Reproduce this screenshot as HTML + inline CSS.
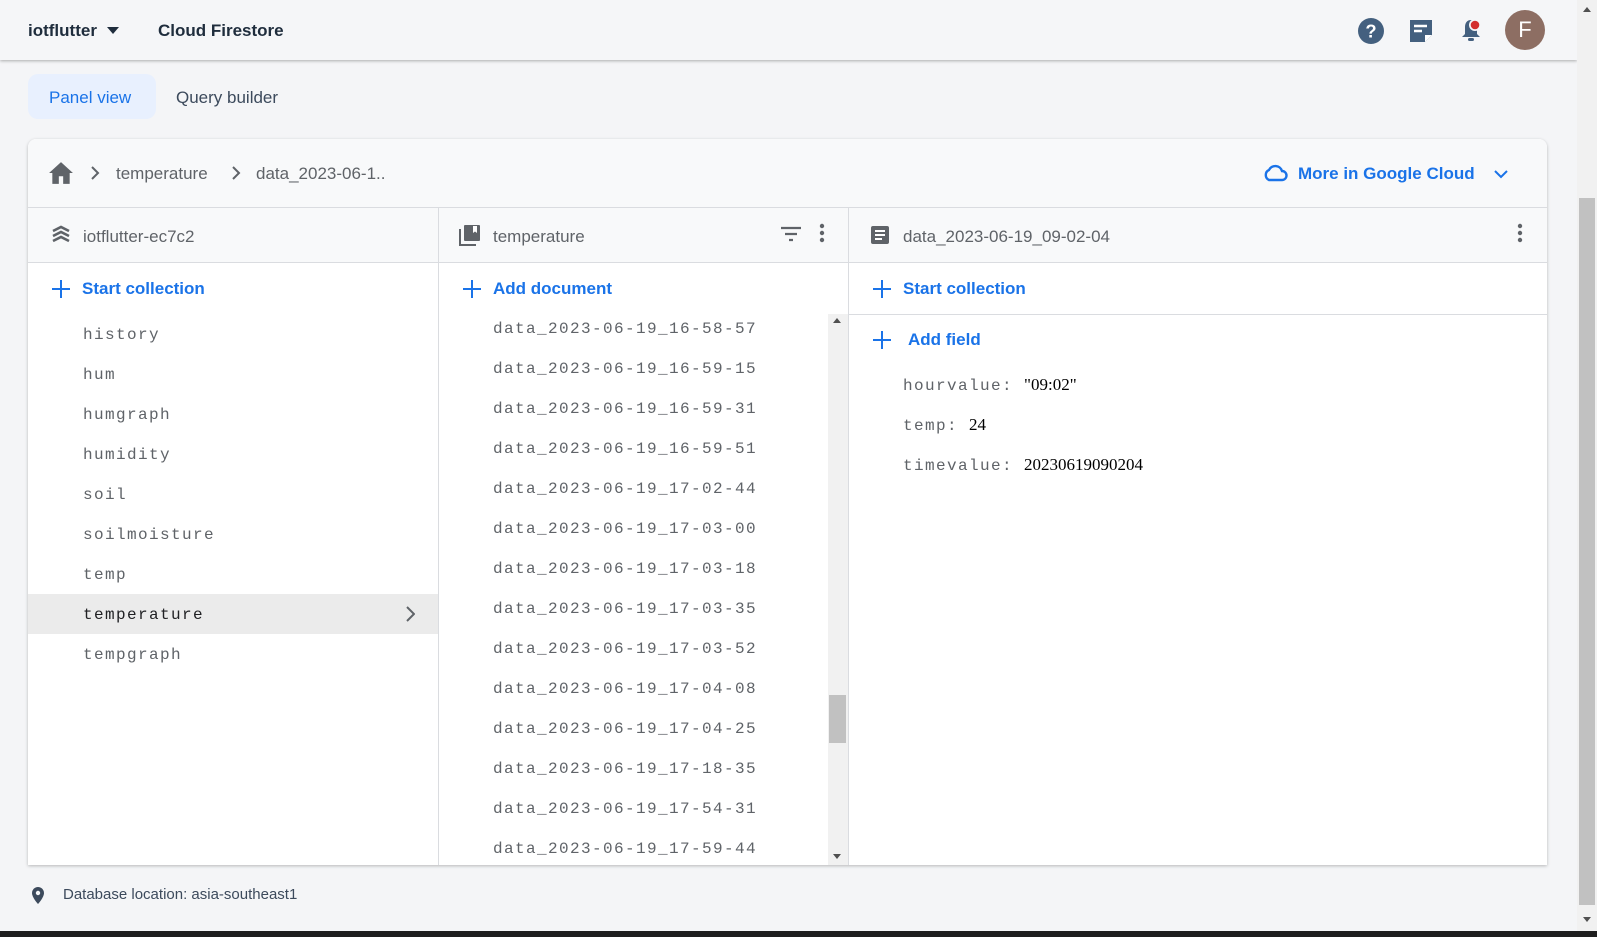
<!DOCTYPE html>
<html><head><meta charset="utf-8"><style>
*{box-sizing:border-box;margin:0;padding:0}
body{width:1597px;height:937px;overflow:hidden;background:#f4f5f7;font-family:"Liberation Sans",sans-serif;position:relative}
.abs{position:absolute}
.hdr{left:0;top:0;width:1577px;height:60px;background:#f5f6f8;box-shadow:0 1px 3px rgba(0,0,0,.3)}
.t{position:absolute;white-space:nowrap;line-height:20px}
.mono{font-family:"Liberation Mono",monospace;font-size:16px;letter-spacing:1.4px;color:#5f6368}
.blue{color:#1a73e8;font-size:17px;font-weight:bold}
.card{left:28px;top:139px;width:1519px;height:726px;background:#fff;border-radius:8px 8px 0 0;box-shadow:0 1px 3px rgba(0,0,0,.25);overflow:hidden}
.plus{position:absolute;width:18px;height:18px}
.plus:before{content:"";position:absolute;left:8px;top:0;width:2px;height:18px;background:#1a73e8}
.plus:after{content:"";position:absolute;left:0;top:8px;width:18px;height:2px;background:#1a73e8}
</style></head><body>
<div class="abs hdr"></div>
<div class="t" style="left:28px;top:21px;font-size:17px;font-weight:bold;color:#1f2d3d">iotflutter</div>
<svg class="abs" style="left:106px;top:26px" width="14" height="9"><path d="M1 1h12L7 8z" fill="#1f2d3d"/></svg>
<div class="t" style="left:158px;top:21px;font-size:17px;font-weight:bold;color:#1f2d3d">Cloud Firestore</div>
<svg class="abs" style="left:1358px;top:18px" width="26" height="26" viewBox="0 0 24 24"><circle cx="12" cy="12" r="12" fill="#44607f"/><text x="12" y="18" text-anchor="middle" font-family="Liberation Sans" font-weight="bold" font-size="17" fill="#fff">?</text></svg>
<svg class="abs" style="left:1409px;top:19px" width="24" height="24" viewBox="0 0 24 24"><path d="M1 1h22v15l-7 7H1z" fill="#44607f"/><path d="M5 7h13M5 12h8" stroke="#fff" stroke-width="2.5"/><path d="M16 23v-7h7" fill="#fff"/></svg>
<svg class="abs" style="left:1459px;top:17px" width="24" height="26" viewBox="0 0 24 26"><path d="M12 3c-4 0-6 3-6 7v7l-3 3h18l-3-3v-7c0-4-2-7-6-7z" fill="#44607f"/><rect x="9" y="21" width="6" height="3" rx="1.5" fill="#44607f"/><circle cx="16" cy="8" r="6" fill="#f5f6f8"/><circle cx="16" cy="8" r="4.3" fill="#d32f2f"/></svg>
<div class="abs" style="left:1505px;top:10px;width:40px;height:40px;border-radius:50%;background:#8d6e63;color:#fff;font-size:22px;text-align:center;line-height:40px">F</div>

<div class="abs" style="left:28px;top:74px;width:128px;height:45px;border-radius:10px;background:#e8f0fe"></div>
<div class="t" style="left:49px;top:88px;font-size:17px;color:#1a73e8">Panel view</div>
<div class="t" style="left:176px;top:88px;font-size:17px;color:#3c4a5c">Query builder</div>

<div class="abs card">
 <div class="abs" style="left:0;top:0;width:1519px;height:69px;background:#f8f9fa;border-bottom:1px solid #dadce0"></div>
 <svg class="abs" style="left:20px;top:22px" width="26" height="24" viewBox="0 0 24 22"><path d="M12 1L1 11h3v10h6v-7h4v7h6V11h3z" fill="#5f6368"/></svg>
 <svg class="abs" style="left:62px;top:26px" width="10" height="16"><path d="M2 2l6 6-6 6" stroke="#5f6368" stroke-width="2" fill="none"/></svg>
 <div class="t" style="left:88px;top:25px;font-size:17px;color:#5f6368">temperature</div>
 <svg class="abs" style="left:203px;top:26px" width="10" height="16"><path d="M2 2l6 6-6 6" stroke="#5f6368" stroke-width="2" fill="none"/></svg>
 <div class="t" style="left:228px;top:25px;font-size:17px;color:#5f6368">data_2023-06-1..</div>
 <svg class="abs" style="left:1234px;top:25px" width="26" height="18" viewBox="0 0 26 18"><path d="M7 16H20a4.5 4.5 0 0 0 0-9 7 7 0 0 0-13-1A5.5 5.5 0 0 0 7 16z" stroke="#1a73e8" stroke-width="2.4" fill="none"/></svg>
 <div class="t" style="left:1270px;top:25px;font-size:17px;font-weight:bold;color:#1a73e8">More in Google Cloud</div>
 <svg class="abs" style="left:1465px;top:29px" width="16" height="12"><path d="M2 3l6 6 6-6" stroke="#1a73e8" stroke-width="2" fill="none"/></svg>

 <div class="abs" style="left:0;top:69px;width:1519px;height:55px;background:#f8f9fa;border-bottom:1px solid #dadce0"></div>
 <div class="abs" style="left:410px;top:69px;width:1px;height:660px;background:#dadce0"></div>
 <div class="abs" style="left:820px;top:69px;width:1px;height:660px;background:#dadce0"></div>
 <svg class="abs" style="left:23px;top:86px" width="20" height="22" viewBox="0 0 20 22"><path d="M2 6l8-4 8 4M2 11l8-4 8 4M2 16l8-4 8 4" stroke="#5f6368" stroke-width="2.6" fill="none"/></svg>
 <div class="t" style="left:55px;top:88px;font-size:17px;color:#5f6368">iotflutter-ec7c2</div>
 <svg class="abs" style="left:431px;top:85px" width="22" height="22" viewBox="0 0 22 22"><path d="M1 5v16h16" stroke="#5f6368" stroke-width="2" fill="none"/><rect x="5" y="1" width="16" height="16" rx="1" fill="#5f6368"/><path d="M14 2v7l2-1.5 2 1.5V2z" fill="#fff"/></svg>
 <div class="t" style="left:465px;top:88px;font-size:17px;color:#5f6368">temperature</div>
 <svg class="abs" style="left:752px;top:87px" width="22" height="16"><path d="M1 2h20M5 8h12M9 14h4" stroke="#5f6368" stroke-width="2.2"/></svg>
 <svg class="abs" style="left:791px;top:84px" width="6" height="20"><circle cx="3" cy="3" r="2.2" fill="#5f6368"/><circle cx="3" cy="10" r="2.2" fill="#5f6368"/><circle cx="3" cy="17" r="2.2" fill="#5f6368"/></svg>
 <svg class="abs" style="left:842px;top:86px" width="20" height="20" viewBox="0 0 20 20"><rect x="1" y="1" width="18" height="18" rx="2" fill="#5f6368"/><path d="M5 6h10M5 10h10M5 14h7" stroke="#fff" stroke-width="2"/></svg>
 <div class="t" style="left:875px;top:88px;font-size:17px;color:#5f6368">data_2023-06-19_09-02-04</div>
 <svg class="abs" style="left:1489px;top:84px" width="6" height="20"><circle cx="3" cy="3" r="2.2" fill="#5f6368"/><circle cx="3" cy="10" r="2.2" fill="#5f6368"/><circle cx="3" cy="17" r="2.2" fill="#5f6368"/></svg>

 <!-- col1 -->
 <div class="plus" style="left:24px;top:141px"></div>
 <div class="t blue" style="left:54px;top:140px">Start collection</div>
 <div class="abs" style="left:0;top:455px;width:410px;height:40px;background:#ebebeb"></div>
 <div class="t mono" style="left:55px;top:186px">history</div>
 <div class="t mono" style="left:55px;top:226px">hum</div>
 <div class="t mono" style="left:55px;top:266px">humgraph</div>
 <div class="t mono" style="left:55px;top:306px">humidity</div>
 <div class="t mono" style="left:55px;top:346px">soil</div>
 <div class="t mono" style="left:55px;top:386px">soilmoisture</div>
 <div class="t mono" style="left:55px;top:426px">temp</div>
 <div class="t mono" style="left:55px;top:466px;color:#202124">temperature</div>
 <svg class="abs" style="left:377px;top:467px" width="10" height="16"><path d="M2 1l7 7-7 7" stroke="#5f6368" stroke-width="2" fill="none"/></svg>
 <div class="t mono" style="left:55px;top:506px">tempgraph</div>

 <!-- col2 -->
 <div class="plus" style="left:435px;top:141px"></div>
 <div class="t blue" style="left:465px;top:140px">Add document</div>
 <div class="abs" style="left:800px;top:175px;width:20px;height:551px;background:#f1f1f1"></div>
 <div class="abs" style="left:801px;top:556px;width:17px;height:48px;background:#c1c1c1"></div>
 <svg class="abs" style="left:804px;top:178px" width="10" height="8"><path d="M1 6h8L5 1z" fill="#505050"/></svg>
 <svg class="abs" style="left:804px;top:714px" width="10" height="8"><path d="M1 1h8L5 6z" fill="#505050"/></svg>
 <div class="t mono" style="left:465px;top:180px">data_2023-06-19_16-58-57</div>
 <div class="t mono" style="left:465px;top:220px">data_2023-06-19_16-59-15</div>
 <div class="t mono" style="left:465px;top:260px">data_2023-06-19_16-59-31</div>
 <div class="t mono" style="left:465px;top:300px">data_2023-06-19_16-59-51</div>
 <div class="t mono" style="left:465px;top:340px">data_2023-06-19_17-02-44</div>
 <div class="t mono" style="left:465px;top:380px">data_2023-06-19_17-03-00</div>
 <div class="t mono" style="left:465px;top:420px">data_2023-06-19_17-03-18</div>
 <div class="t mono" style="left:465px;top:460px">data_2023-06-19_17-03-35</div>
 <div class="t mono" style="left:465px;top:500px">data_2023-06-19_17-03-52</div>
 <div class="t mono" style="left:465px;top:540px">data_2023-06-19_17-04-08</div>
 <div class="t mono" style="left:465px;top:580px">data_2023-06-19_17-04-25</div>
 <div class="t mono" style="left:465px;top:620px">data_2023-06-19_17-18-35</div>
 <div class="t mono" style="left:465px;top:660px">data_2023-06-19_17-54-31</div>
 <div class="t mono" style="left:465px;top:700px">data_2023-06-19_17-59-44</div>

 <!-- col3 -->
 <div class="plus" style="left:845px;top:141px"></div>
 <div class="t blue" style="left:875px;top:140px">Start collection</div>
 <div class="abs" style="left:821px;top:175px;width:698px;height:1px;background:#dadce0"></div>
 <div class="plus" style="left:845px;top:192px"></div>
 <div class="t blue" style="left:880px;top:191px">Add field</div>
 <div class="t mono" style="left:875px;top:236px">hourvalue: <span style="font-family:'Liberation Serif',serif;color:#000;letter-spacing:0;font-size:17px">"09:02"</span></div>
 <div class="t mono" style="left:875px;top:276px">temp: <span style="font-family:'Liberation Serif',serif;color:#000;letter-spacing:0;font-size:17px">24</span></div>
 <div class="t mono" style="left:875px;top:316px">timevalue: <span style="font-family:'Liberation Serif',serif;color:#000;letter-spacing:0;font-size:17px">20230619090204</span></div>
</div>

<svg class="abs" style="left:31px;top:886px" width="14" height="19" viewBox="0 0 14 19"><path d="M7 1a6 6 0 0 0-6 6c0 4.5 6 11 6 11s6-6.5 6-11a6 6 0 0 0-6-6z" fill="#3c4a5c"/><circle cx="7" cy="7" r="2.2" fill="#f4f5f7"/></svg>
<div class="t" style="left:63px;top:885px;font-size:15px;color:#3c4a5c">Database location: asia-southeast1</div>

<div class="abs" style="left:1577px;top:0;width:20px;height:931px;background:#f1f1f1"></div>
<div class="abs" style="left:1579px;top:198px;width:16px;height:707px;background:#c1c1c1"></div>
<svg class="abs" style="left:1582px;top:6px" width="10" height="8"><path d="M1 6h8L5 1z" fill="#505050"/></svg>
<svg class="abs" style="left:1582px;top:916px" width="10" height="8"><path d="M1 1h8L5 6z" fill="#505050"/></svg>
<div class="abs" style="left:0;top:931px;width:1597px;height:6px;background:#1e1e1e"></div>
</body></html>
